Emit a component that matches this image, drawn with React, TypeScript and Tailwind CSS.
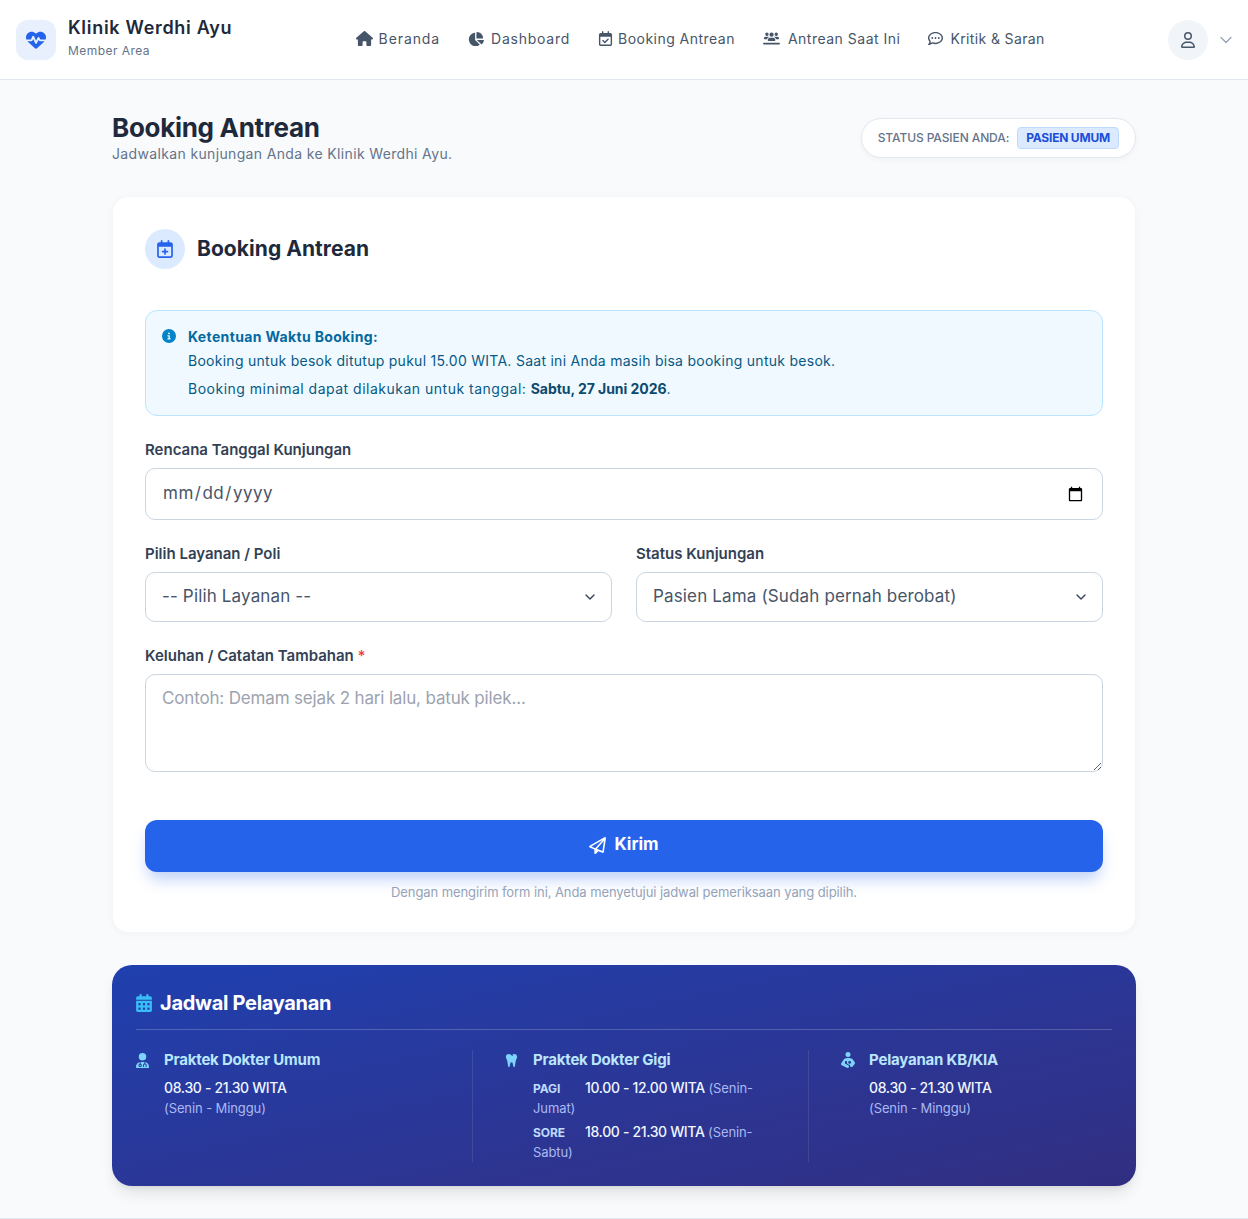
import {
  FaHouse,
  FaChartPie,
  FaRegCalendarCheck,
  FaUsersLine,
  FaRegCommentDots,
  FaRegUser,
  FaHeartPulse,
  FaRegCalendarPlus,
  FaCircleInfo,
  FaRegPaperPlane,
  FaCalendarDays,
  FaUserDoctor,
  FaTooth,
  FaPersonBreastfeeding,
} from "react-icons/fa6";
import { ChevronDown } from "lucide-react";

const navItems = [
  { label: "Beranda", icon: FaHouse, size: 17, cls: "gap-[6px] tracking-[0.9px]" },
  { label: "Dashboard", icon: FaChartPie, size: 16, cls: "gap-[7px] tracking-[0.75px]" },
  { label: "Booking Antrean", icon: FaRegCalendarCheck, size: 15, cls: "gap-[5px] tracking-[0.47px]" },
  { label: "Antrean Saat Ini", icon: FaUsersLine, size: 17, cls: "gap-2 tracking-[0.5px]" },
  { label: "Kritik & Saran", icon: FaRegCommentDots, size: 15, cls: "gap-[7px] tracking-[0.37px]" },
];

function Navbar() {
  return (
    <header className="flex h-20 items-center border-b border-[#e2e8f0] bg-white px-4">
      <div className="flex items-center gap-3">
        <div className="flex h-10 w-10 items-center justify-center rounded-xl bg-[#e8effd] text-[#2563eb]">
          <FaHeartPulse size={20} />
        </div>
        <div className="-mt-1">
          <div className="text-[18px] leading-6 font-semibold tracking-[0.7px] text-[#1e293b]">Klinik Werdhi Ayu</div>
          <div className="mt-[3px] text-xs leading-4 tracking-[0.45px] text-[#64748b]">Member Area</div>
        </div>
      </div>
      <nav className="flex flex-1 justify-center gap-7 pb-[2px]">
        {navItems.map((item) => (
          <a key={item.label} className={`flex items-center ${item.cls} text-sm text-[#475569]`}>
            <item.icon size={item.size} />
            {item.label}
          </a>
        ))}
      </nav>
      <div className="-mr-1 flex items-center gap-2">
        <div className="flex h-10 w-10 items-center justify-center rounded-full bg-[#f1f5f9] text-[#475569]">
          <FaRegUser size={16} />
        </div>
        <ChevronDown size={20} strokeWidth={1.5} className="text-[#94a3b8]" />
      </div>
    </header>
  );
}

function Label({ children }: { children: React.ReactNode }) {
  return <label className="mb-2 block text-[15px] leading-5 font-semibold text-[#334155]">{children}</label>;
}

function SelectField({ label, value }: { label: string; value: string }) {
  return (
    <div>
      <Label>{label}</Label>
      <div className="relative">
        <select
          defaultValue={value}
          className="h-[50px] w-full appearance-none rounded-[10px] border border-[#cbd5e1] bg-white px-4 text-[17px] tracking-[0.15px] text-[#475569]"
        >
          <option>{value}</option>
        </select>
        <ChevronDown size={16} className="pointer-events-none absolute top-[17px] right-[14px] text-[#334155]" />
      </div>
    </div>
  );
}

function BookingForm() {
  return (
    <section className="mt-8 rounded-2xl border border-[#f4f6f9] bg-white px-8 pt-8 pb-[30px] shadow-[0_2px_8px_rgba(15,23,42,0.03)]">
      <div className="flex items-center gap-3">
        <div className="flex h-10 w-10 items-center justify-center rounded-full bg-[#dbeafe] text-[#2563eb]">
          <FaRegCalendarPlus size={18} />
        </div>
        <h2 className="text-[21px] font-bold tracking-[0.05px] text-[#1e293b]">Booking Antrean</h2>
      </div>

      <div className="mt-[41px] flex gap-3 rounded-xl border border-[#bae6fd] bg-[#f0f9ff] px-4 pt-4 pb-4">
        <FaCircleInfo size={14} className="mt-[2px] shrink-0 text-[#0284c7]" />
        <div className="text-sm leading-5 text-[#075985]">
          <div className="font-bold tracking-[0.35px] text-[#0369a1]">Ketentuan Waktu Booking:</div>
          <div className="mt-1 tracking-[0.27px]">Booking untuk besok ditutup pukul 15.00 WITA. Saat ini Anda masih bisa booking untuk besok.</div>
          <div className="mt-2 tracking-[0.5px]">
            Booking minimal dapat dilakukan untuk tanggal: <b className="font-bold tracking-[-0.05px] text-[#0c4a6e]">Sabtu, 27 Juni 2026</b>.
          </div>
        </div>
      </div>

      <div className="mt-6">
        <Label>Rencana Tanggal Kunjungan</Label>
        <input type="date" className="h-[52px] w-full rounded-[10px] border border-[#cbd5e1] bg-white px-4 text-[17px] tracking-[0.5px] text-[#475569]" />
      </div>

      <div className="mt-6 grid grid-cols-2 gap-6">
        <SelectField label="Pilih Layanan / Poli" value="-- Pilih Layanan --" />
        <SelectField label="Status Kunjungan" value="Pasien Lama (Sudah pernah berobat)" />
      </div>

      <div className="mt-6">
        <Label>
          Keluhan / Catatan Tambahan <span className="text-[#ef4444]">*</span>
        </Label>
        <textarea
          rows={3}
          placeholder="Contoh: Demam sejak 2 hari lalu, batuk pilek..."
          className="block h-[98px] w-full rounded-[10px] border border-[#cbd5e1] bg-white px-4 py-[11px] text-[17px] tracking-[-0.16px] text-[#475569] placeholder:text-[#9ca3af]"
        />
      </div>

      <button
        type="button"
        className="mt-12 flex h-[52px] w-full items-center justify-center gap-2 rounded-xl bg-[#2563eb] pb-[2px] text-[17px] font-bold text-white shadow-[0_10px_15px_-3px_rgba(37,99,235,0.3)]"
      >
        <FaRegPaperPlane size={17} />
        Kirim
      </button>
      <p className="mt-[10px] text-center text-[13px] leading-5 tracking-[-0.08px] text-[#94a3b8]">
        Dengan mengirim form ini, Anda menyetujui jadwal pemeriksaan yang dipilih.
      </p>
    </section>
  );
}

function ScheduleHeading({ icon: Icon, size, title }: { icon: typeof FaTooth; size: number; title: string }) {
  return (
    <div className="flex h-5 items-center">
      <span className="w-7 shrink-0 text-[#7dd3fc]">
        <Icon size={size} className="-ml-px" />
      </span>
      <span className="text-[15px] font-bold tracking-[-0.2px] text-[#bae6fd]">{title}</span>
    </div>
  );
}

function Hours() {
  return (
    <div className="mt-2 pl-7">
      <div className="text-sm leading-5 font-medium tracking-[-0.35px] text-[#eff6ff]">08.30 - 21.30 WITA</div>
      <div className="text-[13px] leading-5 tracking-[-0.1px] text-[#aab9f3]">(Senin - Minggu)</div>
    </div>
  );
}

function Schedule() {
  return (
    <section className="mt-8 rounded-[20px] bg-gradient-to-br from-[#1e40af] to-[#312e81] px-6 pt-[26px] pb-6 shadow-lg">
      <div className="flex items-center gap-[7px] border-b border-[#ffffff33] pb-[14px]">
        <FaCalendarDays size={18} className="-ml-px text-[#38bdf8]" />
        <h3 className="text-[20px] leading-6 font-bold tracking-[-0.3px] text-white">Jadwal Pelayanan</h3>
      </div>
      <div className="mt-5 grid grid-cols-[337px_336px_1fr]">
        <div className="border-r border-[#ffffff1a]">
          <ScheduleHeading icon={FaUserDoctor} size={15} title="Praktek Dokter Umum" />
          <Hours />
        </div>
        <div className="border-r border-[#ffffff1a] pr-8 pl-8">
          <ScheduleHeading icon={FaTooth} size={15} title="Praktek Dokter Gigi" />
          <div className="mt-2 pl-7 text-[13px] leading-5 tracking-[-0.1px] text-[#aab9f3]">
            <div>
              <span className="inline-block w-[52px] text-xs font-bold text-[#bfdbfe]">PAGI</span>
              <span className="text-sm font-medium tracking-[-0.35px] text-[#eff6ff]">10.00 - 12.00 WITA</span> (Senin-Jumat)
            </div>
            <div className="mt-1">
              <span className="inline-block w-[52px] text-xs font-bold text-[#bfdbfe]">SORE</span>
              <span className="text-sm font-medium tracking-[-0.35px] text-[#eff6ff]">18.00 - 21.30 WITA</span> (Senin-Sabtu)
            </div>
          </div>
        </div>
        <div className="pl-8">
          <ScheduleHeading icon={FaPersonBreastfeeding} size={16} title="Pelayanan KB/KIA" />
          <Hours />
        </div>
      </div>
    </section>
  );
}

export default function App() {
  return (
    <div className="min-h-[1219px] bg-[#f8fafc] font-[Inter,sans-serif]">
      <Navbar />
      <main className="mx-auto w-[1024px] pt-8">
        <div className="flex items-center justify-between">
          <div>
            <h1 className="text-[26px] leading-8 font-bold tracking-[-0.3px] text-[#1e293b]">Booking Antrean</h1>
            <p className="text-sm leading-5 tracking-[0.35px] text-[#64748b]">Jadwalkan kunjungan Anda ke Klinik Werdhi Ayu.</p>
          </div>
          <div className="flex h-10 items-center gap-2 rounded-full border border-[#e2e8f0] bg-white px-4 shadow-[0_2px_6px_rgba(15,23,42,0.04)]">
            <span className="text-xs font-medium tracking-[-0.1px] text-[#64748b]">STATUS PASIEN ANDA:</span>
            <span className="rounded border border-[#bfdbfe] bg-[#dbeafe] px-2 py-[2px] text-xs font-bold tracking-[-0.2px] text-[#1d4ed8]">PASIEN UMUM</span>
          </div>
        </div>
        <BookingForm />
        <Schedule />
      </main>
      <footer className="mt-8 h-px bg-[#e2e8f0]" />
    </div>
  );
}
